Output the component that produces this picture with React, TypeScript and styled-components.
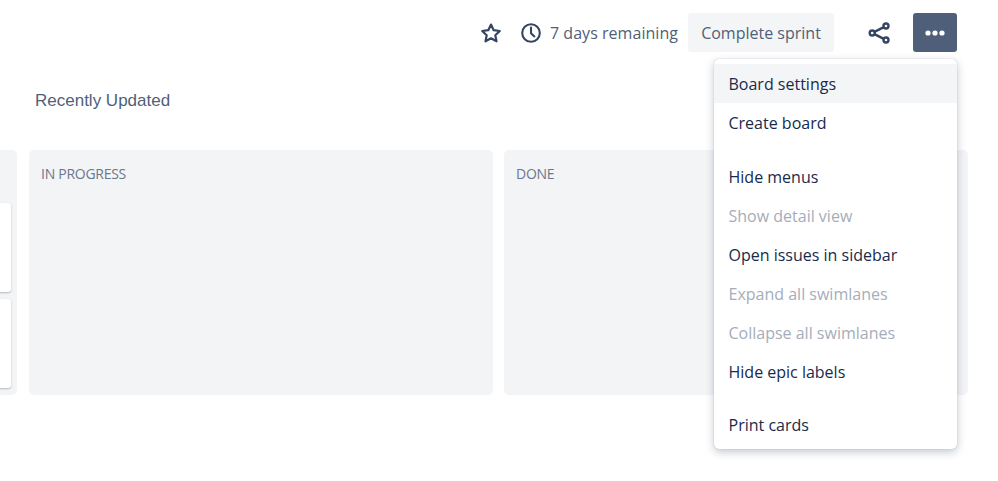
import React from 'react';
import styled, { createGlobalStyle } from 'styled-components';

const GlobalStyle = createGlobalStyle`
  html, body {
    margin: 0;
    padding: 0;
    background: #fff;
    overflow: hidden;
  }
`;

const Page = styled.div`
  position: relative;
  width: 998px;
  height: 481px;
  overflow: hidden;
  font-family: 'Open Sans', 'Noto Sans', sans-serif;
  color: #42526e;
`;

const Toolbar = styled.div`
  display: flex;
  align-items: center;
  height: 39px;
  padding: 13px 41px 0 0;
  justify-content: flex-end;
`;

const IconSlot = styled.span<{ $gap?: number }>`
  display: flex;
  align-items: center;
  justify-content: center;
  color: #344563;
  margin-left: ${(p) => p.$gap ?? 0}px;
`;

const Remaining = styled.span`
  font-size: 16px;
  letter-spacing: 0.04px;
  color: #505f79;
  margin: 0 10px 0 8px;
  white-space: nowrap;
`;

const SprintButton = styled.button`
  height: 39px;
  width: 146px;
  padding: 0;
  border: 0;
  border-radius: 3px;
  background: #f4f5f7;
  color: #505f79;
  font: inherit;
  font-size: 16px;
  margin-right: 33px;
`;

const MoreButton = styled.button`
  display: flex;
  align-items: center;
  justify-content: center;
  width: 44px;
  height: 39px;
  padding: 0;
  border: 0;
  border-radius: 3px;
  background: #505f79;
  margin-left: 22px;
`;

const Heading = styled.h2`
  margin: 0;
  padding: 37px 0 0 35px;
  height: 61px;
  font-family: 'Liberation Sans', Arial, sans-serif;
  font-size: 17px;
  font-weight: 400;
  line-height: 24px;
  color: #505f79;
`;

const Board = styled.div`
  display: flex;
  margin-left: -446px;
`;

const Column = styled.div<{ $width?: number }>`
  flex: 0 0 ${(p) => p.$width ?? 464}px;
  height: 245px;
  padding: 14px 6px 0 12px;
  box-sizing: border-box;
  border-radius: 5px;
  background: #f3f4f6;
  display: flex;
  flex-direction: column;

  & + & {
    margin-left: ${(p) => (p.$width ? 0 : 11)}px;
  }
  &:nth-child(2) {
    margin-left: 12px;
  }
`;

const ColumnTitle = styled.div`
  font-size: 14px;
  line-height: 19px;
  letter-spacing: -0.27px;
  color: #6b778c;
  height: 39px;
`;

const Card = styled.div`
  flex: 0 0 89px;
  margin-bottom: 7px;
  border-radius: 3px;
  background: #fff;
  box-shadow: 0 1px 2px rgba(9, 30, 66, 0.28);
`;

const Menu = styled.div`
  position: absolute;
  top: 59px;
  left: 714px;
  width: 243px;
  height: 390px;
  box-sizing: border-box;
  padding: 5px 0;
  border-radius: 5px;
  background: #fff;
  box-shadow: 0 3px 9px rgba(9, 30, 66, 0.25), 0 0 1px rgba(9, 30, 66, 0.3);
`;

const MenuGroup = styled.div<{ $gap?: number }>`
  margin-top: ${(p) => p.$gap ?? 0}px;
`;

const MenuItem = styled.div<{ $disabled?: boolean; $active?: boolean }>`
  height: 39px;
  line-height: 40px;
  padding-left: 14.5px;
  font-size: 16px;
  white-space: nowrap;
  color: ${(p) => (p.$disabled ? '#a5adba' : '#172b4d')};
  background: ${(p) => (p.$active ? '#f4f5f7' : 'transparent')};
`;

const StarIcon = () => (
  <svg width="22" height="22" viewBox="0 0 22 22" fill="none" stroke="currentColor" strokeWidth="2.2" strokeLinejoin="round">
    <path d="M11 2.6l2.7 5.6 6.1.8-4.5 4.2 1.2 6.1-5.5-3-5.5 3 1.2-6.1L2.2 9l6.1-.8z" />
  </svg>
);

const ClockIcon = () => (
  <svg width="22" height="22" viewBox="0 0 22 22" fill="none" stroke="currentColor" strokeWidth="2.1" strokeLinecap="round" strokeLinejoin="round">
    <circle cx="11" cy="11" r="8.8" />
    <path d="M11 5.6v5.6l3.4 3.2" />
  </svg>
);

const ShareIcon = () => (
  <svg width="24" height="24" viewBox="0 0 24 24" fill="none" stroke="currentColor" strokeWidth="2.4">
    <circle cx="19" cy="5" r="2.5" />
    <circle cx="19" cy="19" r="2.5" />
    <circle cx="5.2" cy="12" r="2.5" />
    <path d="M7.4 10.9l9.4-4.8M7.4 13.1l9.4 4.8" />
  </svg>
);

const DotsIcon = () => (
  <svg width="20" height="6" viewBox="0 0 20 6" fill="#fff">
    <circle cx="3" cy="3" r="2.6" />
    <circle cx="10" cy="3" r="2.6" />
    <circle cx="17" cy="3" r="2.6" />
  </svg>
);

const App: React.FC = () => {
  return (
    <Page>
      <GlobalStyle />
      <Toolbar>
        <IconSlot>
          <StarIcon />
        </IconSlot>
        <IconSlot $gap={18}>
          <ClockIcon />
        </IconSlot>
        <Remaining>7 days remaining</Remaining>
        <SprintButton>Complete sprint</SprintButton>
        <IconSlot>
          <ShareIcon />
        </IconSlot>
        <MoreButton>
          <DotsIcon />
        </MoreButton>
      </Toolbar>
      <Heading>Recently Updated</Heading>
      <Board>
        <Column $width={463}>
          <ColumnTitle />
          <Card />
          <Card />
        </Column>
        <Column>
          <ColumnTitle>IN PROGRESS</ColumnTitle>
        </Column>
        <Column>
          <ColumnTitle>DONE</ColumnTitle>
        </Column>
      </Board>
      <Menu>
        <MenuGroup>
          <MenuItem $active>Board settings</MenuItem>
          <MenuItem>Create board</MenuItem>
        </MenuGroup>
        <MenuGroup $gap={15}>
          <MenuItem>Hide menus</MenuItem>
          <MenuItem $disabled>Show detail view</MenuItem>
          <MenuItem>Open issues in sidebar</MenuItem>
          <MenuItem $disabled>Expand all swimlanes</MenuItem>
          <MenuItem $disabled>Collapse all swimlanes</MenuItem>
          <MenuItem>Hide epic labels</MenuItem>
        </MenuGroup>
        <MenuGroup $gap={14}>
          <MenuItem>Print cards</MenuItem>
        </MenuGroup>
      </Menu>
    </Page>
  );
};

export default App;
